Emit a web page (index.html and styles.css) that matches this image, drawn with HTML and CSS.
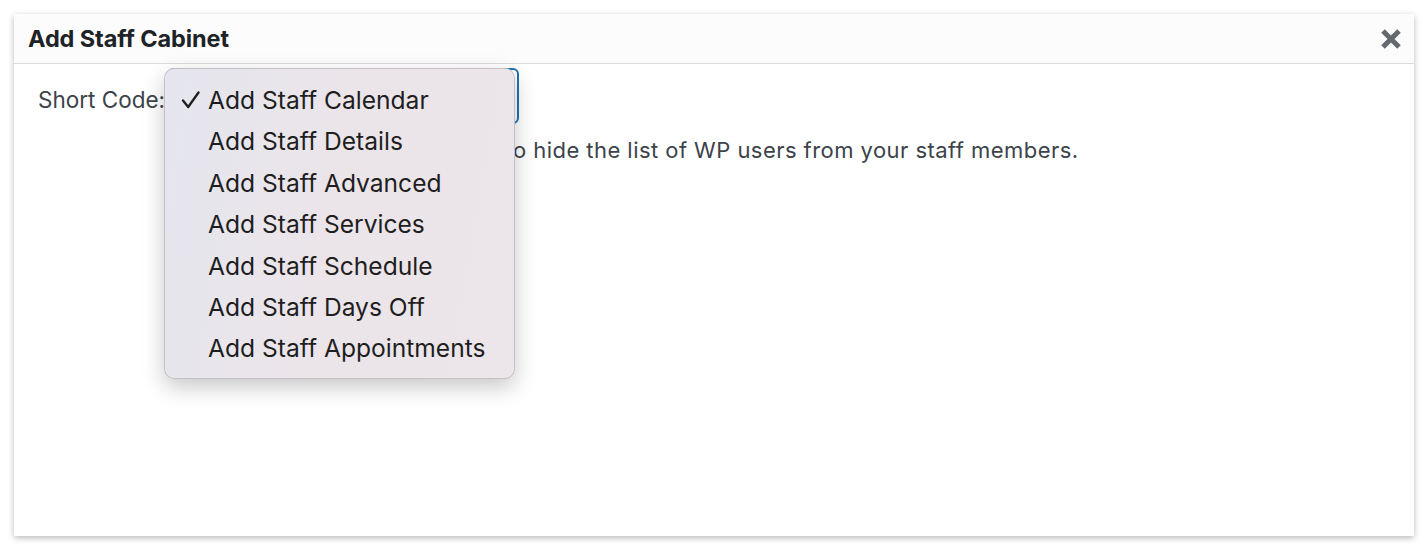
FILE: index.html
```html
<!DOCTYPE html>
<html>
<head>
<meta charset="utf-8">
<link rel="stylesheet" href="styles.css">
</head>
<body>
<div class="modal">
  <div class="modal-header">
    <h1 class="modal-title">Add Staff Cabinet</h1>
    <button class="close" aria-label="Close">
      <svg width="22" height="22" viewBox="0 0 22 22"><path d="M3 3 L19 19 M19 3 L3 19" stroke="#646970" stroke-width="5" stroke-linecap="butt"/></svg>
    </button>
  </div>
  <div class="modal-body">
    <div class="field-row">
      <label class="field-label">Short Code:</label>
      <div class="select-wrap">
        <div class="select">Add Staff Calendar</div>
        <ul class="menu">
          <li class="item checked"><svg class="check" width="20" height="18" viewBox="0 0 20 18"><path d="M2 9.5 L7.2 16 L17.5 1.5" fill="none" stroke="#1e1e1e" stroke-width="2.3" stroke-linecap="round" stroke-linejoin="round"/></svg>Add Staff Calendar</li>
          <li class="item">Add Staff Details</li>
          <li class="item">Add Staff Advanced</li>
          <li class="item">Add Staff Services</li>
          <li class="item">Add Staff Schedule</li>
          <li class="item">Add Staff Days Off</li>
          <li class="item">Add Staff Appointments</li>
        </ul>
      </div>
    </div>
    <p class="desc">Use this shortcode to hide the list of WP users from your staff members.</p>
  </div>
</div>
</body>
</html>
```

FILE: styles.css
```css
html, body {
  margin: 0;
  padding: 0;
  background: #ffffff;
}
body {
  font-family: Inter, "Noto Sans", "Liberation Sans", sans-serif;
  width: 1428px;
  height: 550px;
  overflow: hidden;
}
.modal {
  margin: 14px 0 0 14px;
  width: 1400px;
  height: 522px;
  background: #ffffff;
  box-shadow: 0 2px 6px rgba(0, 0, 0, 0.28);
  display: flex;
  flex-direction: column;
}
.modal-header {
  height: 49px;
  border-bottom: 1px solid #dcdcde;
  background: #fcfcfc;
  display: flex;
  align-items: center;
  justify-content: space-between;
  padding: 0 12px 0 14px;
}
.modal-title {
  margin: 0;
  font-size: 23.5px;
  font-weight: 700;
  color: #1d2327;
  letter-spacing: -0.1px;
}
.close {
  border: 0;
  background: none;
  padding: 0;
  width: 22px;
  height: 22px;
  display: flex;
}
.modal-body {
  padding: 4px 24px 0 24px;
  color: #3c434a;
  font-size: 22px;
}
.field-row {
  display: flex;
  align-items: flex-start;
}
.field-label {
  width: 130px;
  margin-top: 18px;
  font-size: 22.5px;
  line-height: 27px;
  color: #3c434a;
  white-space: nowrap;
}
.select-wrap {
  position: relative;
}
.select {
  width: 351px;
  height: 56px;
  border: 2px solid #2271b1;
  border-radius: 6px;
  box-sizing: border-box;
  padding-left: 16px;
  line-height: 52px;
}
.menu {
  position: absolute;
  left: -4px;
  top: 0;
  width: 351px;
  box-sizing: border-box;
  margin: 0;
  padding: 11px 0 8px 0;
  list-style: none;
  background: linear-gradient(100deg, #e5e6ee 0%, #ebe5ea 45%, #ece6ea 100%);
  border: 1px solid rgba(0, 0, 0, 0.16);
  border-radius: 10px;
  box-shadow: 0 8px 22px rgba(0, 0, 0, 0.22);
}
.item {
  position: relative;
  height: 41.4px;
  line-height: 41.4px;
  padding-left: 43px;
  font-size: 24.6px;
  color: #1e1e1e;
  white-space: nowrap;
}
.check {
  position: absolute;
  left: 16px;
  top: 11px;
}
.desc {
  margin: 13px 0 0 257px;
  font-size: 22px;
  line-height: 27px;
  letter-spacing: 0.45px;
  color: #3c434a;
}
```
